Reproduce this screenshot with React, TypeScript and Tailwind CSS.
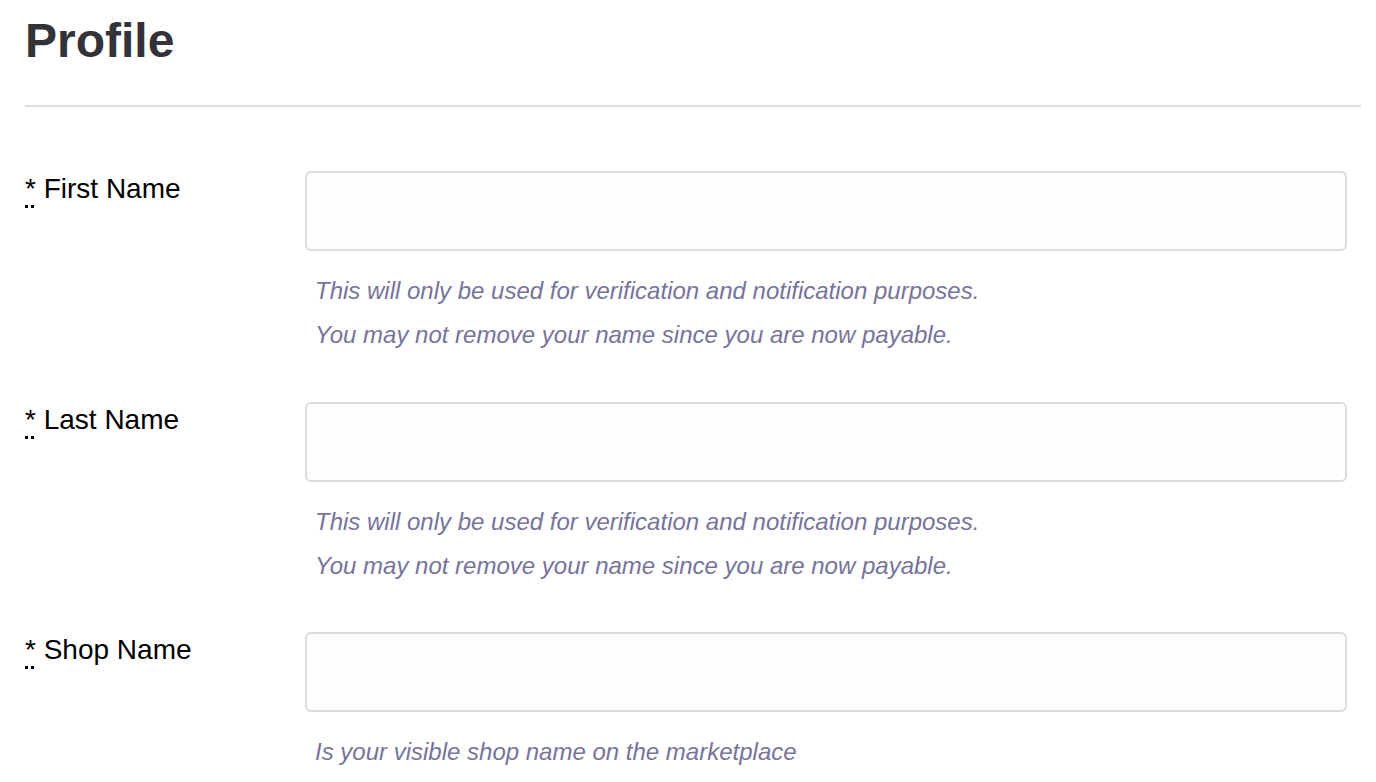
import React from "react";

const rows = [
  {
    label: "First Name",
    help: [
      "This will only be used for verification and notification purposes.",
      "You may not remove your name since you are now payable.",
    ],
  },
  {
    label: "Last Name",
    help: [
      "This will only be used for verification and notification purposes.",
      "You may not remove your name since you are now payable.",
    ],
  },
  {
    label: "Shop Name",
    help: ["Is your visible shop name on the marketplace"],
  },
];

export default function App() {
  return (
    <div
      className="min-h-[782px] w-full bg-white pl-[25px] pr-[15px]"
      style={{ fontFamily: '"Liberation Sans", Arial, sans-serif' }}
    >
      <h1 className="pt-[17px] text-[48px] font-bold leading-[48px] text-[#333338]">Profile</h1>
      <div className="mt-[40px] h-[2px] w-full bg-[#dcdde1]" />
      <div className="mt-[64px] flex flex-col gap-[44.5px]">
        {rows.map((r) => (
          <div key={r.label} className="flex">
            <div className="w-[280px] shrink-0 text-[28px] leading-[36px] text-black">
              <abbr
                title="required"
                className="underline decoration-dotted decoration-[3px] underline-offset-[7px]"
              >
                *
              </abbr>{" "}
              {r.label}
            </div>
            <div className="mr-[14px] flex-1">
              <input
                type="text"
                className="block h-[80px] w-full rounded-[6px] border-2 border-[#dadbe0] bg-[#fefefe] px-[10px] outline-none"
              />
              <div className="mt-[18px] pl-[10px]">
                {r.help.map((h) => (
                  <p key={h} className="text-[24px] italic leading-[44px] text-[#76749a]">
                    {h}
                  </p>
                ))}
              </div>
            </div>
          </div>
        ))}
      </div>
    </div>
  );
}
